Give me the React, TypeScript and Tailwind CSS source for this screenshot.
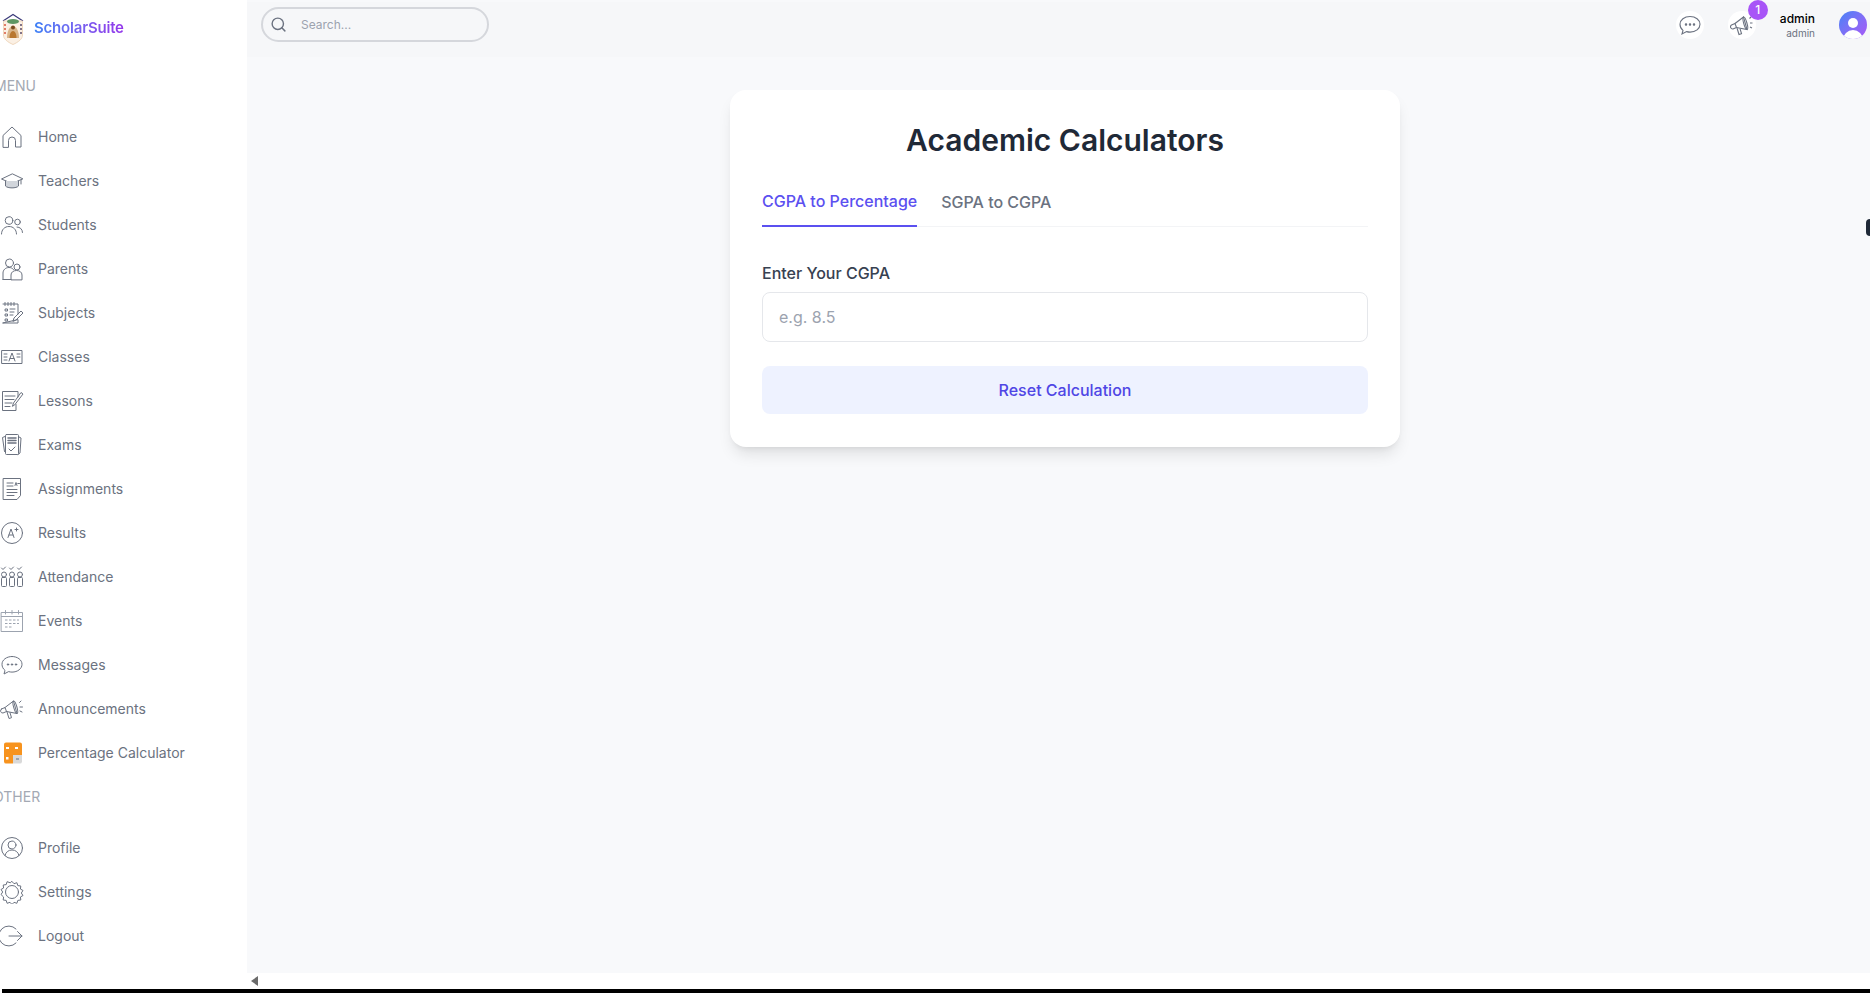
import type { ReactNode } from "react";
import { Search } from "lucide-react";

const Icon = ({ children, className = "" }: { children: ReactNode; className?: string }) => (
  <svg
    viewBox="0 0 24 24"
    fill="none"
    stroke="#6b7280"
    strokeWidth={1}
    strokeLinecap="round"
    strokeLinejoin="round"
    className={`w-6 h-6 shrink-0 ${className}`}
  >
    {children}
  </svg>
);

const MessageGlyph = () => (
  <>
    <path d="M12 3.500c5.600 0 10 3.400 10 7.800s-4.400 7.800-10 7.800c-1.200 0-2.300-.2-3.400-.5L4 21l1-3.600c-1.900-1.500-3-3.700-3-6.100C2 6.900 6.400 3.500 12 3.500z" />
    <circle cx="8" cy="11.500" r=".7" fill="#6b7280" />
    <circle cx="12" cy="11.500" r=".7" fill="#6b7280" />
    <circle cx="16" cy="11.500" r=".7" fill="#6b7280" />
  </>
);

const MegaphoneGlyph = () => (
  <>
    <path d="M1.500 12l3.500-1.500 1.500 4-3.500 1.500a2.200 2.200 0 0 1-1.500-4z" />
    <path d="M5 10.500L13.500 4l3.500 12.500-10.500-2" />
    <ellipse cx="15.300" cy="10.200" rx="1.600" ry="6.500" transform="rotate(-16 15.300 10.200)" />
    <path d="M7 15l2 6.500 2.500-.8-1.500-5" />
    <path d="M19.500 5.500l1.500-1.500M20 10h2.500M20 14l2 1" />
  </>
);

const menuItems: { label: string; icon: ReactNode }[] = [
  {
    label: "Home",
    icon: (
      <Icon>
        <path d="M3 22V10.500L12 2l9 8.500V22h-5.500v-6.500a3.500 3.500 0 0 0-7 0V22z" />
      </Icon>
    ),
  },
  {
    label: "Teachers",
    icon: (
      <Icon>
        <path d="M12 5L1.500 10 12 14.500 22.500 10z" />
        <path d="M5.500 12v5c2 2.500 11 2.500 13 0v-5" fill="#d1d5db" />
        <path d="M21 11v4" />
      </Icon>
    ),
  },
  {
    label: "Students",
    icon: (
      <Icon>
        <circle cx="9" cy="7.500" r="3.800" />
        <circle cx="17.500" cy="9" r="2.800" />
        <path d="M1.500 21c0-4.500 3.200-7.500 7.500-7.500s7.500 3 7.500 7.500" />
        <path d="M17 14c3 0 5.500 2.200 5.500 5.500" />
      </Icon>
    ),
  },
  {
    label: "Parents",
    icon: (
      <Icon>
        <circle cx="9.500" cy="6" r="4" />
        <circle cx="17" cy="10" r="3" />
        <path d="M3 22.500V16c0-3 2.500-5.500 6-5.500 2 0 3.500.8 4.500 2" />
        <path d="M11 22.500V18c0-2.800 2.500-4.500 5.500-4.500s5.500 1.700 5.500 4.500v4.500z" />
        <path d="M3 22.500h8" />
      </Icon>
    ),
  },
  {
    label: "Subjects",
    icon: (
      <Icon>
        <path d="M3 3h15v10M18 19v3H3z" />
        <path d="M5 1.500v3M8 1.500v3M11 1.500v3M14 1.500v3" />
        <path d="M5.500 8h2v2h-2zM5.500 13h2v2h-2zM5.500 18h2v2h-2zM10 8h5M10 11h4M10 14h3" />
        <path d="M13 20l1-3 7-7 2 2-7 7z" />
      </Icon>
    ),
  },
  {
    label: "Classes",
    icon: (
      <Icon>
        <rect x="2" y="5.500" width="20" height="13" />
        <path d="M9 16l3-8 3 8M10 13.500h4" />
        <path d="M4 9h3M4 12h3M4 15h3M17 9h3M17 12h3" />
      </Icon>
    ),
  },
  {
    label: "Lessons",
    icon: (
      <Icon>
        <path d="M18 8V2.500H2.500v19H16v-6" />
        <path d="M5 7h10M5 10.500h9M5 14h7M5 17.500h5" />
        <path d="M12.500 17l1-3L21 3.500l2 1.500-8 10.500z" />
      </Icon>
    ),
  },
  {
    label: "Exams",
    icon: (
      <Icon>
        <path d="M5 3.500l-2.500 1 2 14" />
        <path d="M19 4l2 1-1 15-2 1.500" />
        <rect x="5.500" y="1.500" width="13" height="20" rx="1" />
        <path d="M8 5h8M8 7.500h8M8 10h8" strokeWidth={1.500} />
        <path d="M9 16l2 2 4-4" />
      </Icon>
    ),
  },
  {
    label: "Assignments",
    icon: (
      <Icon>
        <path d="M3.500 1.500h17v17l-3.500 4h-13.500z" />
        <path d="M7 6h6M7 9h6M7 12.500h10M7 15.500h10M7 18.500h7" />
        <path d="M15 8.500l1-3 1 3M17.800 6.500h1.700" />
      </Icon>
    ),
  },
  {
    label: "Results",
    icon: (
      <Icon>
        <circle cx="12" cy="12" r="10.500" />
        <path d="M8 16.500l3-8.500 3 8.500M9 14h4" />
        <path d="M15 8.500h3M16.500 7v3" />
      </Icon>
    ),
  },
  {
    label: "Attendance",
    icon: (
      <Icon>
        <path d="M1.500 3l1.500 1.500L5.500 2M9.500 3l1.500 1.500L13.500 2M17.500 3l1.500 1.500L21.500 2" />
        <circle cx="4" cy="9.500" r="2.500" />
        <circle cx="12" cy="9.500" r="2.500" />
        <circle cx="20" cy="9.500" r="2.500" />
        <rect x="1.500" y="12.500" width="5" height="9" rx="1" />
        <rect x="9.500" y="12.500" width="5" height="9" rx="1" />
        <rect x="17.500" y="12.500" width="5" height="9" rx="1" />
      </Icon>
    ),
  },
  {
    label: "Events",
    icon: (
      <Icon>
        <rect x="1.500" y="3.500" width="21" height="19" stroke="#9ca3af" />
        <path d="M5.500 1.500v3.500M12 1.500v3.500M18.500 1.500v3.500M1.500 7.500h21" stroke="#9ca3af" />
        <path d="M5 11h14M5 14.500h14M5 18h8" strokeDasharray="2.500 1.500" strokeLinecap="butt" stroke="#9ca3af" />
      </Icon>
    ),
  },
  { label: "Messages", icon: <Icon><MessageGlyph /></Icon> },
  { label: "Announcements", icon: <Icon><MegaphoneGlyph /></Icon> },
  {
    label: "Percentage Calculator",
    icon: (
      <svg viewBox="0 0 24 24" className="w-6 h-6 shrink-0">
        <path d="M6 1.500h14a2 2 0 0 1 2 2V14h-9v8.500H6a2 2 0 0 1-2-2v-17a2 2 0 0 1 2-2z" fill="#f7931e" />
        <path d="M13 14h9v6.500a2 2 0 0 1-2 2h-7z" fill="#d9d9d9" />
        <rect x="6" y="6" width="3" height="2" fill="#fff" />
        <rect x="15" y="6" width="3" height="2" fill="#fff" />
        <rect x="6" y="16" width="2.500" height="2.500" fill="#fff" />
        <rect x="16" y="17" width="3" height="2" fill="#9ca3af" />
      </svg>
    ),
  },
];

const otherItems: { label: string; icon: ReactNode }[] = [
  {
    label: "Profile",
    icon: (
      <Icon>
        <circle cx="12" cy="12" r="10.500" />
        <circle cx="12" cy="9" r="4" />
        <path d="M5 19.500c.8-3.500 3.500-5.500 7-5.500s6.200 2 7 5.500" />
      </Icon>
    ),
  },
  {
    label: "Settings",
    icon: (
      <Icon>
        <circle cx="12" cy="12" r="6.500" />
        <path d="M12 1.500l2 2.200 2.900-1 .9 2.900 3 .4-.4 3 2.600 1.500-1.700 2.500 1.700 2.500-2.600 1.500.4 3-3 .4-.9 2.900-2.900-1-2 2.200-2-2.200-2.900 1-.9-2.900-3-.4.4-3L1 14.500l1.700-2.500L1 9.500l2.600-1.500-.4-3 3-.4.9-2.900 2.900 1z" />
      </Icon>
    ),
  },
  {
    label: "Logout",
    icon: (
      <Icon>
        <path d="M16 5A10 10 0 1 0 16 19" />
        <path d="M9 12h13M17.500 7.500L22 12l-4.500 4.500" />
      </Icon>
    ),
  },
];

const NavRow = ({ label, icon }: { label: string; icon: ReactNode }) => (
  <div className="h-11 flex items-center gap-[14px] -ml-[2px]">
    {icon}
    <span className="text-sm text-[#6b7280] whitespace-nowrap">{label}</span>
  </div>
);

// school crest, the reference logo is a small raster badge
const Crest = () => (
  <svg viewBox="0 0 22 32" className="w-[22px] h-[32px] shrink-0">
    <path d="M1 8L11 1.500 21 8" fill="none" stroke="#3b3a7a" strokeWidth={1.200} />
    <path d="M1.500 8h19v14c0 4-4 7-9.500 9.500C5.500 29 1.500 26 1.500 22z" fill="#fbf0e4" stroke="#efd7bd" strokeWidth={1} />
    <ellipse cx="11" cy="8.500" rx="6" ry="2.500" fill="#5d9663" />
    <path d="M5 25c0-7 2.500-12 6-12s6 5 6 12z" fill="#d9b58a" />
    <path d="M7.500 25c0-4 1.500-7 3.500-7s3.500 3 3.500 7z" fill="#b9772f" />
    <circle cx="11" cy="14.500" r="2" fill="#7a4a1f" />
    <path d="M3 11v12" stroke="#d8553f" strokeWidth={1.500} strokeDasharray="2 2" />
    <path d="M19 11v12" stroke="#5a4a6a" strokeWidth={1.500} strokeDasharray="2 2" />
  </svg>
);

export default function App() {
  return (
    <div className="relative w-[1870px] h-[993px] overflow-hidden bg-white flex flex-col font-['Inter',sans-serif]">
      <div className="flex flex-1 min-h-0">
        <aside className="w-[247px] shrink-0 overflow-hidden bg-white pl-[2px]">
          <div className="h-[56px] flex items-center gap-[10px] pt-[1px]">
            <Crest />
            <span className="text-[15px] font-semibold tracking-[-0.2px] bg-gradient-to-r from-[#3b82f6] to-[#9333ea] bg-clip-text text-transparent">
              ScholarSuite
            </span>
          </div>
          <div className="h-[59px] flex items-center -ml-[8px] text-sm text-[#a3a9b3]">MENU</div>
          {menuItems.map((item) => (
            <NavRow key={item.label} {...item} />
          ))}
          <div className="h-[44px] flex items-center -ml-[9px] text-sm text-[#a3a9b3]">OTHER</div>
          <div className="mt-[7px]">
            {otherItems.map((item) => (
              <NavRow key={item.label} {...item} />
            ))}
          </div>
        </aside>

        <div className="flex-1 min-w-0 flex flex-col bg-[#f8f9fb]">
          <header className="h-[55px] shrink-0 mt-[2px] bg-[#f6f7f9] flex items-center justify-between pl-[14px] pr-[3px] pb-[10px]">
            <div className="w-[228px] h-[35px] rounded-full border-2 border-[#d5d7dc] flex items-center gap-[14px] pl-[7px]">
              <Search size={17} color="#6b7280" />
              <span className="text-xs text-[#9ca3af]">Search...</span>
            </div>
            <div className="flex items-center">
              <div className="w-7 h-7 rounded-full bg-white flex items-center justify-center">
                <svg viewBox="0 0 24 24" fill="none" stroke="#6b7280" strokeWidth={1.100} className="w-6 h-6">
                  <MessageGlyph />
                </svg>
              </div>
              <div className="relative w-7 h-7 ml-6 rounded-full bg-white flex items-center justify-center">
                <svg viewBox="0 0 24 24" fill="none" stroke="#6b7280" strokeWidth={1.100} className="w-6 h-6">
                  <MegaphoneGlyph />
                </svg>
                <span className="absolute -top-[11px] -right-[12px] w-5 h-5 rounded-full bg-[#a855f7] text-white text-xs font-medium flex items-center justify-center">
                  1
                </span>
              </div>
              <div className="ml-[24px] flex flex-col items-end">
                <span className="text-xs leading-4 font-medium text-black">admin</span>
                <span className="text-[10px] leading-3 text-[#6b7280]">admin</span>
              </div>
              <div className="relative w-7 h-7 ml-6 rounded-full bg-gradient-to-br from-[#3b82f6] to-[#a855f7] overflow-hidden">
                <span className="absolute left-[9px] top-[7px] w-[10px] h-[10px] rounded-full bg-white" />
                <span className="absolute left-[4px] top-[19px] w-5 h-5 rounded-full bg-white" />
              </div>
            </div>
          </header>

          <main className="flex-1 min-h-0 flex justify-center pt-[33px] pl-[13px]">
            <section className="w-[670px] h-[357px] rounded-2xl bg-white px-8 pt-8 shadow-[0_10px_15px_-3px_rgba(0,0,0,0.1),0_4px_6px_-4px_rgba(0,0,0,0.1)]">
              <h1 className="text-[30px] leading-9 font-semibold text-[#1f2937] text-center">Academic Calculators</h1>
              <div className="mt-[22px] flex gap-6 border-b border-[#f3f4f6] h-[47px]">
                <div className="h-[47px] border-b-2 border-[#5b50f0] flex items-start pt-[9px] text-base font-medium text-[#5b50f0]">
                  CGPA to Percentage
                </div>
                <div className="pt-[10px] text-base font-medium text-[#6b7280]">SGPA to CGPA</div>
              </div>
              <div className="mt-[34px] text-base leading-6 font-medium text-[#374151]">Enter Your CGPA</div>
              <div className="mt-[7px] h-[50px] rounded-lg border border-[#e5e7eb] flex items-center px-4 text-base text-[#9ca3af]">
                e.g. 8.5
              </div>
              <div className="mt-6 h-[48px] rounded-lg bg-[#eef2ff] flex items-center justify-center text-base font-medium text-[#4f46e5]">
                Reset Calculation
              </div>
            </section>
          </main>
        </div>
      </div>

      <div className="h-[16px] shrink-0 pl-[251px] flex items-center">
        <span className="w-0 h-0 border-y-[5px] border-y-transparent border-r-[7px] border-r-[#6b6b6b]" />
      </div>
      <div className="h-[4px] shrink-0 ml-[2px] bg-black" />

      <span className="absolute right-0 top-[219px] w-[4px] h-[17px] rounded-l-[4px] bg-[#1f2937]" />
    </div>
  );
}
